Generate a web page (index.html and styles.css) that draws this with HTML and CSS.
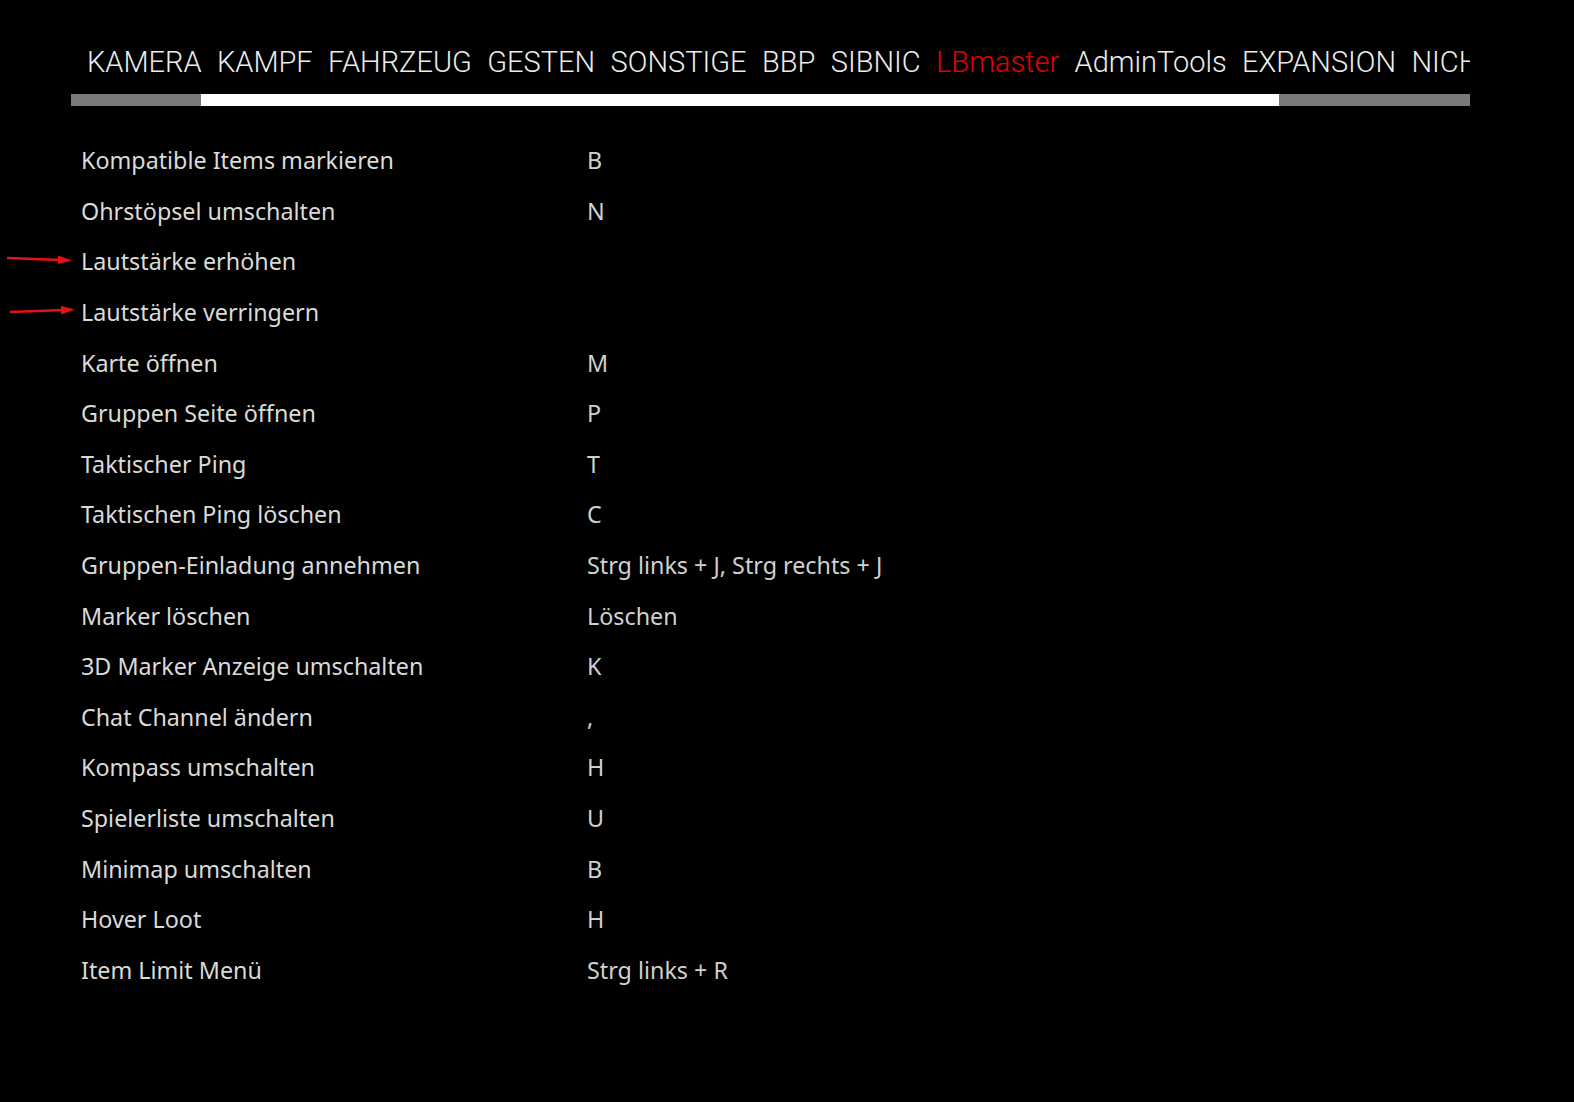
FILE: index.html
```html
<!doctype html>
<html lang="de">
<head>
  <meta charset="UTF-8">
  <title>Tastenbelegung</title>
  <link rel="stylesheet" href="styles.css">
</head>
<body>
<div class="menu">
  <div class="tabs">
    <div class="tabs__track">
      <span class="tab">KAMERA</span>
      <span class="tab">KAMPF</span>
      <span class="tab">FAHRZEUG</span>
      <span class="tab">GESTEN</span>
      <span class="tab">SONSTIGE</span>
      <span class="tab">BBP</span>
      <span class="tab">SIBNIC</span>
      <span class="tab tab--active">LBmaster</span>
      <span class="tab">AdminTools</span>
      <span class="tab">EXPANSION</span>
      <span class="tab">NICHT ZUGEWIESEN</span>
    </div>
  </div>

  <div class="scroll">
    <div class="scroll__thumb"></div>
  </div>

  <ul class="binds">
    <li class="bind"><span class="bind__name">Kompatible Items markieren</span><span class="bind__key">B</span></li>
    <li class="bind"><span class="bind__name">Ohrstöpsel umschalten</span><span class="bind__key">N</span></li>
    <li class="bind bind--marked"><span class="bind__name">Lautstärke erhöhen</span><span class="bind__key"></span></li>
    <li class="bind bind--marked"><span class="bind__name">Lautstärke verringern</span><span class="bind__key"></span></li>
    <li class="bind"><span class="bind__name">Karte öffnen</span><span class="bind__key">M</span></li>
    <li class="bind"><span class="bind__name">Gruppen Seite öffnen</span><span class="bind__key">P</span></li>
    <li class="bind"><span class="bind__name">Taktischer Ping</span><span class="bind__key">T</span></li>
    <li class="bind"><span class="bind__name">Taktischen Ping löschen</span><span class="bind__key">C</span></li>
    <li class="bind"><span class="bind__name">Gruppen-Einladung annehmen</span><span class="bind__key">Strg links + J, Strg rechts + J</span></li>
    <li class="bind"><span class="bind__name">Marker löschen</span><span class="bind__key">Löschen</span></li>
    <li class="bind"><span class="bind__name">3D Marker Anzeige umschalten</span><span class="bind__key">K</span></li>
    <li class="bind"><span class="bind__name">Chat Channel ändern</span><span class="bind__key">,</span></li>
    <li class="bind"><span class="bind__name">Kompass umschalten</span><span class="bind__key">H</span></li>
    <li class="bind"><span class="bind__name">Spielerliste umschalten</span><span class="bind__key">U</span></li>
    <li class="bind"><span class="bind__name">Minimap umschalten</span><span class="bind__key">B</span></li>
    <li class="bind"><span class="bind__name">Hover Loot</span><span class="bind__key">H</span></li>
    <li class="bind"><span class="bind__name">Item Limit Menü</span><span class="bind__key">Strg links + R</span></li>
  </ul>
</div>

<!-- red annotation arrows drawn over the screenshot -->
<svg class="arrow arrow--up" width="70" height="12" viewBox="0 0 70 12">
  <path d="M0 5 L54 7" stroke="#e41212" stroke-width="2.5" fill="none"/>
  <path d="M51 2.5 L65 7.5 L51 11 Z" fill="#e41212"/>
</svg>
<svg class="arrow arrow--down" width="70" height="12" viewBox="0 0 70 12">
  <path d="M0 7 L54 5" stroke="#e41212" stroke-width="2.5" fill="none"/>
  <path d="M51 1 L65 4.5 L51 9.5 Z" fill="#e41212"/>
</svg>
</body>
</html>
```

FILE: styles.css
```css
body {
  margin: 0;
  background: #000;
  min-height: 1102px;
  font-family: "Noto Sans", "DejaVu Sans", sans-serif;
}

.menu {
  width: 1399px;
  margin-left: 71px;
  padding-top: 42px;
}

/* Tabs */

.tabs {
  overflow: hidden;
  height: 41px;
}

.tabs__track {
  display: flex;
  gap: 15.4px;
  padding-left: 16px;
  white-space: nowrap;
}

.tab {
  font-family: Roboto, "Liberation Sans", sans-serif;
  font-weight: 300;
  font-size: 29px;
  line-height: 41px;
  color: #ececec;
}

.tab--active {
  color: #e10000;
}

/* Scrollbar */

.scroll {
  margin-top: 11px;
  height: 12px;
  background: #7a7a7a;
}

.scroll__thumb {
  margin-left: 130px;
  width: 1078px;
  height: 100%;
  background: #fff;
}

/* Keybinds */

.binds {
  list-style: none;
  margin: 0;
  padding: 29px 0 0 10px;
}

.bind {
  display: flex;
  height: 50.6px;
  align-items: center;
  font-size: 23.3px;
}

.bind__name {
  width: 506px;
  color: #dadada;
}

.bind__key {
  color: #d0d0d0;
}

/* Annotation arrows */

.arrow {
  position: absolute;
}

.arrow--up {
  left: 7px;
  top: 253px;
}

.arrow--down {
  left: 10px;
  top: 305px;
}
```
